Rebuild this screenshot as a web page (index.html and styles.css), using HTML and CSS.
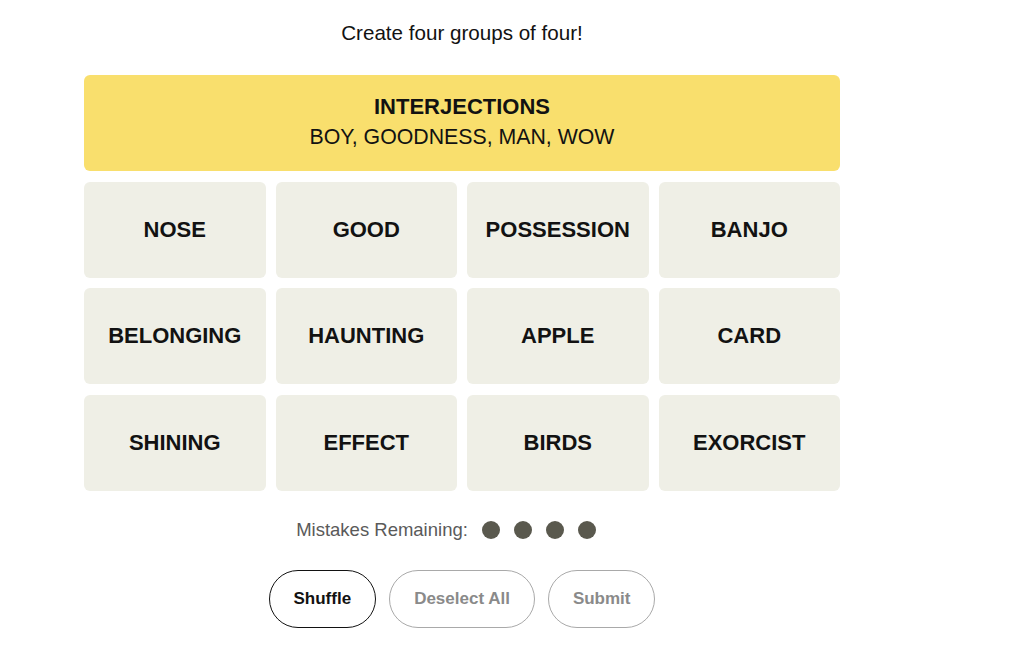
FILE: index.html
```html
<!DOCTYPE html>
<html lang="en">
<head>
    <meta charset="UTF-8">
    <meta name="viewport" content="width=device-width, initial-scale=1.0">
    <title>Connections</title>
    <link rel="stylesheet" href="styles.css">
</head>
<body>
    <div class="page">
        <p class="prompt">Create four groups of four!</p>

        <div class="board">
            <div class="solved solved-yellow">
                <div class="solved-title">INTERJECTIONS</div>
                <div class="solved-members">BOY, GOODNESS, MAN, WOW</div>
            </div>

            <div class="tile">NOSE</div>
            <div class="tile">GOOD</div>
            <div class="tile">POSSESSION</div>
            <div class="tile">BANJO</div>

            <div class="tile">BELONGING</div>
            <div class="tile">HAUNTING</div>
            <div class="tile">APPLE</div>
            <div class="tile">CARD</div>

            <div class="tile">SHINING</div>
            <div class="tile">EFFECT</div>
            <div class="tile">BIRDS</div>
            <div class="tile">EXORCIST</div>
        </div>

        <div class="mistakes">
            <span class="mistakes-label">Mistakes Remaining:</span>
            <span class="dots">
                <span class="dot"></span>
                <span class="dot"></span>
                <span class="dot"></span>
                <span class="dot"></span>
            </span>
        </div>

        <div class="controls">
            <button class="btn btn-active">Shuffle</button>
            <button class="btn">Deselect All</button>
            <button class="btn">Submit</button>
        </div>
    </div>
</body>
</html>
```

FILE: styles.css
```css
:root {
    --text-color: #121212;
    --tile-bg: #efefe6;
    --yellow: #f9df6d;
    --dot-color: #5a594e;
    --muted: #5a5a5a;
}

* {
    box-sizing: border-box;
    margin: 0;
    padding: 0;
}

body {
    font-family: 'Liberation Sans', Arial, sans-serif;
    color: var(--text-color);
    background: #ffffff;
}

.page {
    width: 924px;
    display: flex;
    flex-direction: column;
    align-items: center;
    padding-top: 21px;
}

.prompt {
    font-size: 20.6px;
    line-height: 24px;
    margin-bottom: 30px;
}

.board {
    width: 756px;
    display: grid;
    grid-template-columns: repeat(4, 1fr);
    grid-auto-rows: 96px;
    column-gap: 10px;
    row-gap: 10.6px;
}

.solved {
    grid-column: 1 / -1;
    border-radius: 6px;
    display: flex;
    flex-direction: column;
    align-items: center;
    justify-content: center;
    padding-bottom: 2px;
}

.solved-yellow {
    background-color: var(--yellow);
}

.solved-title {
    font-size: 22px;
    font-weight: 700;
    line-height: 30px;
}

.solved-members {
    font-size: 21.3px;
    line-height: 31px;
}

.tile {
    background-color: var(--tile-bg);
    border-radius: 6px;
    display: flex;
    align-items: center;
    justify-content: center;
    font-size: 22px;
    font-weight: 700;
}

.mistakes {
    display: flex;
    align-items: center;
    margin-top: 28px;
    height: 22px;
}

.mistakes-label {
    font-size: 18.5px;
    color: var(--muted);
    margin-right: 14px;
}

.dots {
    display: flex;
    gap: 13.5px;
    width: 146px;
}

.dot {
    width: 18.5px;
    height: 18.5px;
    border-radius: 50%;
    background-color: var(--dot-color);
}

.controls {
    display: flex;
    gap: 13px;
    margin-top: 29px;
}

.btn {
    font-family: inherit;
    font-size: 17px;
    font-weight: 700;
    height: 58px;
    padding: 0 24px;
    border-radius: 32px;
    background: #ffffff;
    border: 1px solid #a9a9a9;
    color: #8a8a8a;
    cursor: pointer;
}

.btn-active {
    border-color: var(--text-color);
    color: var(--text-color);
}
```
